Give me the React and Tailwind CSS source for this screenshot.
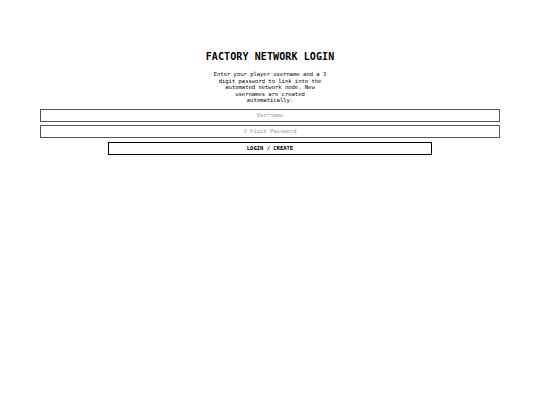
import React from 'react';

const mono = { fontFamily: '"DejaVu Sans Mono", "Liberation Mono", monospace' };

const App = () => {
  return (
    <div className="min-h-screen bg-white text-black" style={mono}>
      <div className="mx-[40px] pt-[51px] flex flex-col items-center">
        <h1 className="text-[10px] leading-[12px] font-bold tracking-[0.1px]">FACTORY NETWORK LOGIN</h1>
        <p className="mt-[8px] w-[118px] text-center text-[5.5px] leading-[6.5px]">
          Enter your player username and a 3 digit password to link into the automated network node. New usernames are created automatically.
        </p>
        <input
          className="mt-[5px] w-full h-[13px] border border-[#555] text-center text-[5.5px] placeholder:text-[#999] outline-none"
          placeholder="Username"
        />
        <input
          className="mt-[3px] w-full h-[13px] border border-[#555] text-center text-[5.5px] placeholder:text-[#999] outline-none"
          placeholder="3 Digit Password"
        />
        <button className="mt-[4px] w-[324px] h-[13px] border border-black text-[5.5px] font-bold">
          LOGIN / CREATE
        </button>
      </div>
    </div>
  );
};

export default App;
